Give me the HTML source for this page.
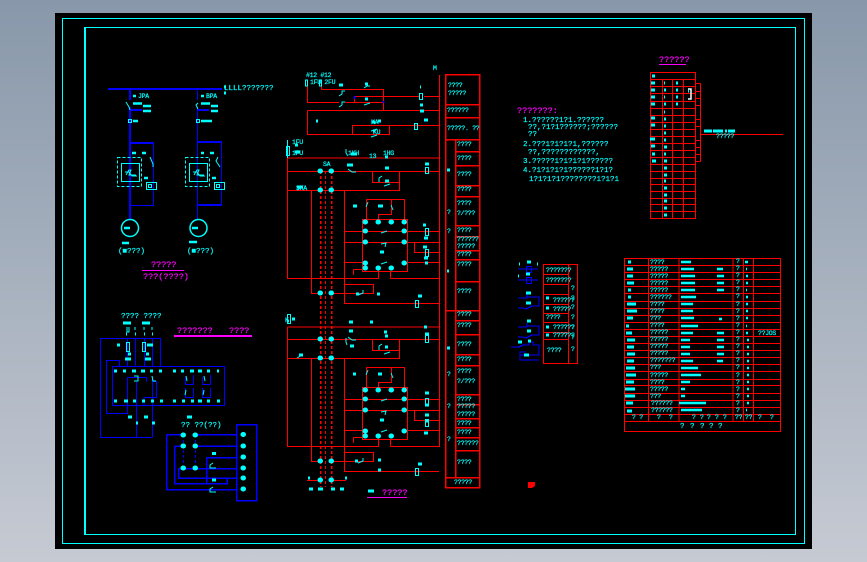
<!DOCTYPE html>
<html>
<head>
<meta charset="utf-8">
<style>
html,body{margin:0;padding:0;width:867px;height:562px;overflow:hidden;background:linear-gradient(to bottom,#8898aa,#c6cad3)}
svg{display:block;position:absolute;left:0;top:0}
text{font-family:"Liberation Mono",monospace;fill:#00ffff;font-size:6.5px;letter-spacing:-.3px;stroke:#00ffff;stroke-width:.2}
.m{fill:#ff00ff;stroke:#ff00ff;font-size:8.5px;letter-spacing:0}
.c{font-size:7.5px;letter-spacing:0}
.r{fill:none;stroke:#ff0000;stroke-width:1}
.b{fill:none;stroke:#0000ff;stroke-width:1}
.y{fill:none;stroke:#00ffff;stroke-width:1}
.k{fill:none;stroke:#00ffff;stroke-width:3}
.d{fill:none;stroke:#00ffff;stroke-width:5;stroke-linecap:round}
.g{shape-rendering:crispEdges}
</style>
</head>
<body>
<svg width="867" height="562" viewBox="0 0 867 562" xmlns="http://www.w3.org/2000/svg">
<rect x="55" y="13" width="757" height="536" fill="#000"/>
<g class="g">
<rect x="62.5" y="18.5" width="742" height="525" fill="none" stroke="#00ffff"/>
<rect x="85" y="27.5" width="710.5" height="507" fill="none" stroke="#00ffff" stroke-width="1"/>
<path d="M85 27v508" stroke="#00ffff" stroke-width="2"/>

<!-- left one-line diagram -->
<path class="b" style="stroke-width:2" d="M108 89H222M130 89V100M130 107V219M130 110H142M130 143H154M197 110H209M197 142H222M197 205H222"/>
<path class="b" d="M197.5 89V100M197.5 107V219M153.5 143V205.5H130M221.5 142V205"/>
<rect x="117.5" y="157.5" width="24" height="29" fill="none" stroke="#00ffff" stroke-dasharray="3 2"/>
<rect x="185.5" y="157.5" width="24" height="29" fill="none" stroke="#00ffff" stroke-dasharray="3 2"/>
<path class="y" d="M121.5 163.5h18v18h-18zM189.5 163.5h18v18h-18zM146.5 182.5h10v7h-10zM214.5 182.5h10v7h-10zM151.5 184.5h-3v3h3zM219.5 184.5h-3v3h3zM128.5 119.500h3v3h-3zM196.5 119.500h3v3h-3z"/>
</g>
<path class="y" d="M126 175l3-5h2l-2 5h7M125 172h4l3 4h5M194 175l3-5h2l-2 5h7M193 172h4l3 4h5M126 102l3 5 1 3M198 103l-2 2 2 4M150 157l3 7v3M218 157l-2 4 4 6"/>
<circle cx="130" cy="228" r="8.5" fill="none" stroke="#00ffff" stroke-width="1.5"/>
<circle cx="198.5" cy="228" r="8.5" fill="none" stroke="#00ffff" stroke-width="1.5"/>
<path class="k" style="stroke-width:2.5" d="M133 96h3M201 96h3M133 103.500h9M201 103.500h9M143 106h8M143 111h8M211 106h7M211 111h7M133 121h5M201 121h11M132 153h4M142 153h4M201 153h3M210 153h4M144 178h4M212 178h4M124 228h6M192 228h6M122 243h7M189 242h8"/>
<text x="138" y="98">JPA</text><text x="206" y="98">BPA</text>

<text class="c" x="224" y="90">LLLL???????</text>
<path class="k" d="M224 87h2M224 93h2"/>
<text class="c" x="118" y="253">(■???)</text>
<text class="c" x="187" y="253">(■???)</text>
<text class="m" x="151" y="267">?????</text>
<text class="m" x="143" y="279">???(????)</text>
<path class="g" stroke="#ff00ff" fill="none" d="M142 270.5H184"/>

<!-- bottom left wiring -->
<text class="c" x="121" y="318">???? ????</text>
<text class="m" x="177" y="333">???????</text>
<text class="m" x="229" y="333">????</text>
<path class="g" stroke="#ff00ff" stroke-width="2" fill="none" d="M174 336H252"/>
<g class="g">
<path class="b" d="M100.5 338.5H160.5V366M100.5 338V437.5H152.5M106.5 413.5V360.5H119.5V366M106 413.5H127.5V405M112.5 366.5H224.5V405.5H112.5zM127.5 338V366M135.5 338V366M144.5 338V366M152.5 338V366M127.5 405V377.5H146.500V382M136.5 382V437M152.5 377V437M144 405V397.5H156.5V381.5H152M185.5 377V384.5H193.5V375M202.5 377V384.5H210.5V375M185.5 388V397.5H193.5V388M202.5 388V397.5H210.500V388"/>
<path class="y" d="M126.5 342.5h3v9h-3zM142.5 342.5h3v9h-3zM127 327v5h2v-5M135 327v3M144 327v3M152 327v3"/>
</g>
<path class="k" d="M123 323h8M142 323h8M117 345h3M147 345h6M128 354h3M146 354h3M125 359h6M145 359h6M126 334h1M135 334h1M144 334h1M152 334h1M114 371h3M123 371h3M132 371h4M141 371h4M150 371h3M159 371h3M173 371h3M181 371h3M190 371h4M198 371h4M207 371h3M217 371h2M114 401h3M124 401h4M133 401h3M142 401h3M151 401h3M160 401h3M173 401h3M182 401h3M191 401h3M198 401h4M207 401h3M217 401h3M128 417h4M144 417h4M189 417h3"/>
<path class="y" d="M186 376l1 5M204 376l1 5M186 390l-1 5M204 390l-1 5M134 376h4v5h-4M152 376l1 5h3"/>
<text class="c" x="181" y="427">?? ??(??)</text>
<path class="k" d="M187 417h4M136 423h2M152 423h3"/>
<g class="g">
<path class="b" style="stroke-width:1.5" d="M236.5 424.5H256.5V500.5H236.5zM166.5 434.5H183M166.5 434.5V489.5H236M183 446H174.5V483.5H227V478M195 434.5H236M198 446H236M206.5 457.5H236M206.5 457.5V484M178.5 468.5V478H236M178.5 468.5H236"/>
<path class="b" stroke-dasharray="3 2" d="M183.5 440v25M195.5 440v25"/>
</g>
<path class="d" d="M243 434.5h.5M243 446h.5M243 457h.5M243 468h.5M243 478h.5M243 489h.5M183 435h.5M195 435h.5M183 446h.5M195 446h.5M183 468h.5M195 468h.5"/>
<path class="k" d="M212 453.5h4M212 480h4"/>
<path class="y" d="M213 463l-3 2v3h6M213 487l-3 2v3h6"/>

<!-- main schematic red -->
<g class="g">
<path class="r" d="M307.5 86V102.5H339M321.5 86V89.5H383.5V110M354 96.5H419M424 96.5H439M354.5 96.5V102M345 102.5H383.5M307.5 110.5H439M307.5 110.5V134.5H352.5V125.5H389.5V134.5H352M389 125.5H439M439.5 75V447"/>
<path class="r" d="M287.5 158V278.5H378.5V268M390.5 278.5H439M390.5 278.5V271M287.5 158H439M287.5 171.5H439M287.5 190.5H399.5V171M372.5 171V182.5H399M311.5 190V293.5H320M344.5 190V303.5H439M344.5 284.5H373.5V293.5H331"/>
<path class="r" d="M362.5 219.5H407.5V271.5H362.5zM366.5 199.5H404.5V219M366.5 199.5V219M391.5 199.5V214.5H378.5V219M344 231.5H439M344 242.5H439M344 262.5H362M407 262.5H439M414.5 242.5V252.5H439M353.5 269.5H362M353.5 269.5V275"/>
<path class="r" d="M287.5 327V446.5H378.5V436M390.5 446.5H439M390.5 446.5V439M287.5 327H439M287.5 339.5H439M287.5 358.5H399.5V339M372.5 339V350.5H399M311.5 358V461.5H320M344.5 358V471.5H439M344.5 452.5H373.5V461.5H331"/>
<path class="r" d="M362.5 387.5H407.5V439.5H362.5zM366.5 367.5H404.5V387M366.5 367.5V387M391.5 367.5V382.5H378.5V387M344 399.5H439M344 410.5H439M344 430.5H362M407 430.5H439M414.5 410.5V420.5H439M353.5 437.5H362M353.5 437.5V443"/>
<path class="r" d="M307 480.5H320M331 480.5H346"/>
<path class="r" style="stroke-width:1.5" stroke-dasharray="3 2" d="M320.5 171V487M331.5 171V487"/>
<path class="r" stroke-dasharray="3 2" d="M325.5 171V487"/>
<path class="r" style="stroke-width:1.5" d="M445.5 74.5H479.5V487.5H445.5zM445 104.5H479M445 117.5H479M445 139.5H479M455 151.5H479M455 165.5H479M455 185.5H479M455 196.5H479M455 225.5H479M455 236.5H479M455 250.5H479M455 259.5H479M455 281.5H479M445 310.5H479M455 320.5H479M455 334.5H479M455 354.5H479M455 365.5H479M455 394.5H479M455 404.5H479M455 418.5H479M455 427.5H479M455 437.5H479M455 450.5H479M445 477.5H479M455.5 139V477"/>
<path d="M353.5 96h2v3h-2zM382.5 101h2v2h-2z" fill="#0000ff"/>
<path class="y" d="M287.5 140v18M307.5 80h-2v6h2zM321.5 80h-2v6h2z"/>
<path class="y" d="M419.5 93.5h3v6h-3zM414.5 123.5h3v6h-3zM425.5 167.5h3v6h-3zM425.5 228.5h3v7h-3zM425.5 249.5h3v7h-3zM425.5 335.5h3v7h-3zM425.5 398.5h3v7h-3zM425.5 419.5h3v7h-3zM415.5 300.5h3v7h-3zM415.5 468.5h3v7h-3zM287.5 314.5h3v9h-3zM286.5 146.5h3v9h-3z"/>
</g>
<path class="y" d="M339 96l3-2v-3h3M339 107l3-2v-3h3M364 88l3-2h3M364 105l6-2M371 131l6-2M371 137l6-2M348 156l-2-3v-4M348 169l4 3h4M382 176l-3 2v4M384 186l6-2M297 190l5-3M366 207l2-5M391 205l2 5M381 233l6-2M381 244l5-1-1 4M381 264l6-2M358 295l5-2v-3M347 345l-1-3v-4M348 337l4 3h4M382 344l-3 2v4M384 354l6-2M297 358l5-3M366 375l2-5M391 373l2 5M381 401l6-2M381 412l5-1-1 4M381 432l6-2M358 463l5-2v-3"/>
<path class="d" d="M320 171h.5M331 171h.5M320 190h.5M331 190h.5M320 293h.5M331 293h.5M320 339h.5M331 339h.5M320 358h.5M331 358h.5M320 461h.5M331 461h.5M320 480h.5M331 480h.5M365 222h.5M378 222h.5M391 222h.5M404 222h.5M365 231h.5M404 231h.5M365 242h.5M404 242h.5M365 263h.5M404 263h.5M365 268h.5M378 268h.5M391 268h.5M365 390h.5M378 390h.5M391 390h.5M404 390h.5M365 399h.5M404 399h.5M365 410h.5M404 410h.5M365 431h.5M404 431h.5M365 436h.5M378 436h.5M391 436h.5"/>
<path class="k" d="M339 85h4M365 84h3M365 99h3M372 122h3M378 121h3M373 131h2M316 121h2M295 145h3M295 152h5M351 154h6M385 157h3M347 165h6M385 168h4M385 181h4M297 187h6M353 206h4M378 206h5M380 252h4M420 87h1M420 105h3M420 111h4M424 120h4M425 164h4M423 225h3M424 238h4M423 247h4M424 258h4M425 263h3M356 294h3M377 294h3M289 321h-1M292 319h3M349 322h4M370 322h3M349 331h4M384 332h3M350 346h4M385 336h3M385 347h3M299 355h4M353 374h3M378 374h4M380 420h4M355 461h3M378 460h3M378 470h3M418 296h4M424 327h3M425 334h4M425 405h4M425 393h4M425 415h4M425 421h4M424 433h4M418 464h4M308 478h2M345 478h2M309 489h4M318 489h5M331 489h4M340 489h4M368 491h6"/>
<text x="306" y="77">#12 #12</text><text x="310" y="84">1FU 2FU</text>
<text x="433" y="70">M</text><text x="292" y="144">1FU</text><text x="292" y="155">1FU</text><text x="285" y="322">K</text>
<text x="323" y="166">SA</text><text x="348" y="155">1KH</text><text x="369" y="158">13</text><text x="383" y="155">1HG</text>
<text x="296" y="190">SKA</text><text x="371" y="124">KA</text><text x="373" y="134">KU</text>

<!-- red table text -->
<text x="448" y="87">????</text><text x="448" y="95">?????</text><text x="447" y="112">??????</text><text x="447" y="130">?????. ??</text>
<text x="457" y="146">????</text><text x="457" y="160">????</text><text x="457" y="176">????</text><text x="457" y="191">????</text><text x="457" y="205">????</text><text x="457" y="215">?/???</text><text x="457" y="232">????</text><text x="457" y="241">??????</text><text x="457" y="248">?????</text><text x="457" y="256">????</text><text x="457" y="266">????</text><text x="457" y="293">????</text>
<text x="457" y="316">????</text><text x="457" y="327">????</text><text x="457" y="346">????</text><text x="457" y="361">????</text><text x="457" y="373">????</text><text x="457" y="383">?/???</text><text x="457" y="401">????</text><text x="457" y="408">?????</text><text x="457" y="416">?????</text><text x="457" y="425">????</text><text x="457" y="434">????</text><text x="457" y="445">??????</text><text x="457" y="464">????</text><text x="454" y="484">?????</text>
<text x="447" y="214">?</text><text x="447" y="233">?</text><text x="447" y="376">?</text><text x="447" y="408">?</text><text x="447" y="441">?</text>
<path class="k" d="M447 170h3M447 348h3M447 271h2"/>
<text class="m" x="382" y="495">?????</text>
<path class="g" fill="none" stroke="#ff00ff" d="M367 497.5H407"/>
<path d="M528 482h7v4l-3 2h-4z" fill="#ff0000"/>

<!-- notes -->
<text class="m" x="517" y="113">???????:</text>
<text class="c" x="523" y="122">1.??????1?1.??????</text><text class="c" x="528" y="129">??,?1?1??????;??????</text><text class="c" x="528" y="136">??</text>
<text class="c" x="523" y="146">2.???1?1?1?1,??????</text><text class="c" x="528" y="154">??,????????????,</text>
<text class="c" x="523" y="163">3.?????1?1?1?1??????</text><text class="c" x="523" y="172">4.?1?1?1?1??????1?1?</text><text class="c" x="529" y="181">1?1?1?1????????1?1?1</text>

<!-- right top table -->
<text class="m" x="659" y="62">??????</text>
<g class="g">
<path fill="none" stroke="#ff00ff" d="M659 64.5H686"/>
<path class="r" d="M650.5 72.5H695.5V218.5H650.5zM651 79.5H695M651 86.5H695M651 93.5H695M651 101.5H695M651 108.5H695M651 115.5H695M651 122.5H695M651 129.5H695M651 136.5H695M651 143.5H695M651 150.5H695M651 157.5H695M651 164.5H695M651 171.5H695M651 178.5H695M651 184.5H695M651 191.5H695M651 198.5H695M651 204.5H695M651 211.5H695M662.5 79V218M672.5 79V218M683.5 79V218M695 83.5H700.5V162M695 91.5H700M695 98.5H700M695 105.5H700M695 119.5H700M695 126.5H700M695 140.5H700M695 147.5H700M695 154.5H700M695 161.5H700M700 134.5H783"/>
</g>
<path d="M688 89h3v10h-3M691 89v10" fill="none" stroke="#fff" stroke-width="1.5"/>
<path class="k" d="M652 76h3M651 83h4M651 90h4M651 97h4M651 104h4M651 118h4M651 125h4M650 139h5M651 146h4M652 154h3M652 161h4M664 83h1M664 90h2M664 97h1M664 104h2M664 112h1M664 119h2M664 126h2M664 133h2M664 140h2M664 147h3M664 154h2M664 161h3M664 168h3M664 175h3M664 181h2M664 188h3M664 195h3M664 201h3M664 208h3M664 215h3M676 83h2M676 90h2M676 97h2M676 104h2M704 131h8M713 131h10M725 131h2M728 131h7M688 91h1"/>
<text x="716" y="138">?????</text>

<!-- middle small table -->
<g class="g">
<path class="r" style="stroke-width:1.2" d="M543.5 264.5H577.5V363.5H543.5zM544 274.5H568M544 284.5H568M544 294.5H568M544 304.5H568M544 313.5H568M544 322.5H568M544 332.5H568M544 339.5H568M568.5 264V363"/>
<path class="b" style="stroke-width:1.2" d="M518 269H538M518 280H538M526.5 266.5h5v6h-5zM526.5 277.5h5v6h-5z"/>
<path class="b" style="stroke-width:1.2" d="M518 298h9v-1h12v9h-7l-6 3-3-1h-5M527 297v-3M518 327h9v-1h12v9h-7l-6 3-3-1h-5M527 326v-3M511 347h8l4-2h6v-3h4v3h6v10h-19v-3h6M520 352v8h19"/>
</g>
<path class="k" d="M527 262h4M526 274h4M526 293h5M526 303h5M527 321h4M527 331h4M518 342h4M528 341h3M524 355h5M520 264h-1M537 264h1M519 276h-1"/>
<text x="546" y="272">???????</text><text x="546" y="282">???????</text><text x="553" y="302">??????</text><text x="553" y="311">?????</text><text x="546" y="319">????</text><text x="553" y="329">??????</text><text x="553" y="337">??????</text><text x="547" y="352">????</text>
<path class="k" d="M546 298h3M546 308h3M546 327h3M546 335h3"/>
<text x="571" y="290">?</text><text x="571" y="300">?</text><text x="571" y="309">?</text><text x="571" y="319">?</text><text x="571" y="329">?</text><text x="571" y="339">?</text><text x="571" y="351">?</text>

<!-- big table -->
<g class="g">
<path class="r" style="stroke-width:1.3" d="M624.5 258.5H780.5V431.5H624.5zM624 265.5H781M624 272.5H781M624 279.5H781M624 286.5H781M624 293.5H781M624 301.5H781M624 308.5H781M624 315.5H781M624 322.5H781M624 329.5H781M624 336.5H781M624 343.5H781M624 350.5H781M624 357.5H781M624 364.5H781M624 371.5H781M624 379.5H781M624 385.5H781M624 393.5H781M624 400.5H781M624 407.5H781M624 414.5H781M624 421.5H781M648.5 258V421M679 258V421M733 258V421M743.5 258V421M753.5 258V421"/>
</g>
<path class="k" d="M628 262h3M627 269h6M627 276h6M627 283h7M628 290h3M628 297h3M627 304h9M627 311h10M627 318h6M626 326h3M626 333h6M627 340h8M627 347h7M627 354h8M627 361h7M626 368h9M626 375h10M626 382h8M625 389h10M625 396h10M626 403h7M627 411h5"/>
<path class="k" style="stroke-width:2.5" d="M681 262h10M681 269h13M681 276h14M681 283h14M681 290h14M681 297h15M681 304h12M681 311h12M681 318h13M681 326h17M681 333h12M681 340h9M681 347h9M681 354h9M681 361h12M681 368h17M681 375h20M681 382h9M681 389h4M681 396h4M679 403h27M681 410h21M717 269h6M717 276h7M717 283h7M717 290h7M719 319h3M717 333h7M717 340h7M717 347h7M717 354h7M717 361h6M745 262h3M746 269h1M746 276h2M746 283h2M746 290h1M746 297h2M746 304h2M746 311h2M746 318h2M746 326h1M746 333h2M747 340h2M747 347h2M747 354h2M747 361h2M747 368h2M747 375h2M747 382h2M747 389h2M747 396h2M747 403h2M746 410h1"/>
<text x="650" y="264">????</text><text x="650" y="271">?????</text><text x="650" y="278">?????</text><text x="650" y="285">?????</text><text x="650" y="292">?????</text><text x="650" y="299">??????</text><text x="650" y="306">????</text><text x="650" y="313">????</text><text x="650" y="320">???</text><text x="650" y="327">????</text><text x="650" y="334">?????</text><text x="650" y="341">?????</text><text x="650" y="348">?????</text><text x="650" y="355">?????</text><text x="650" y="362">???????</text><text x="650" y="369">???</text><text x="650" y="377">?????</text><text x="650" y="384">????</text><text x="650" y="391">?????</text><text x="650" y="398">???</text><text x="651" y="405">??????</text><text x="651" y="412">??????</text>
<text x="736" y="263">?</text><text x="736" y="270">?</text><text x="736" y="277">?</text><text x="736" y="284">?</text><text x="736" y="291">?</text><text x="736" y="298">?</text><text x="736" y="306">?</text><text x="736" y="313">?</text><text x="736" y="320">?</text><text x="736" y="327">?</text><text x="736" y="334">?</text><text x="736" y="341">?</text><text x="736" y="348">?</text><text x="736" y="355">?</text><text x="736" y="362">?</text><text x="736" y="369">?</text><text x="736" y="377">?</text><text x="736" y="384">?</text><text x="736" y="391">?</text><text x="736" y="398">?</text><text x="736" y="405">?</text><text x="736" y="412">?</text>
<text x="758" y="335">??JOS</text>
<text x="632" y="419">? ?</text><text x="657" y="419">?</text><text x="669" y="419">?</text><text x="692" y="419">?</text><text x="700" y="419">?</text><text x="707" y="419">?</text><text x="715" y="419">?</text><text x="723" y="419">?</text><text x="735" y="419">??</text><text x="745" y="419">??</text><text x="758" y="419">?</text><text x="770" y="419">?</text>
<text class="c" x="680" y="428">?</text><text class="c" x="690" y="428">?</text><text class="c" x="700" y="428">?</text><text class="c" x="709" y="428">?</text><text class="c" x="718" y="428">?</text>
</svg>
</body>
</html>
